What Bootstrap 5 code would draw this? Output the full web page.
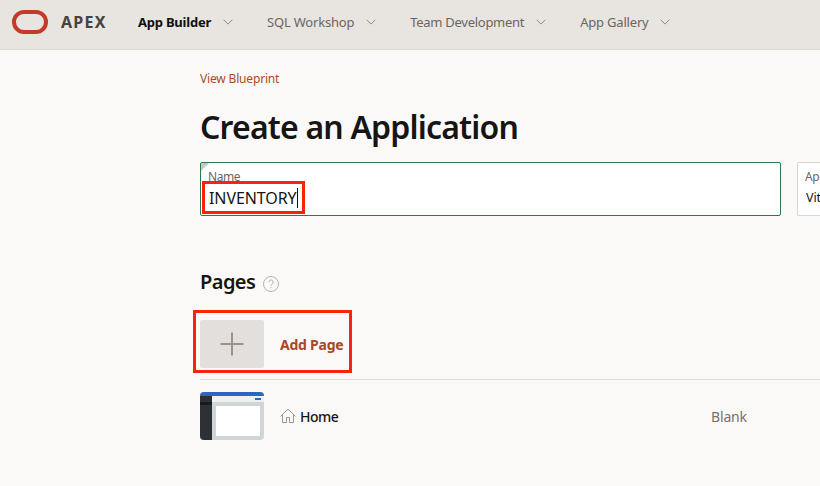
<!DOCTYPE html>
<html lang="en">
<head>
<meta charset="utf-8">
<meta name="viewport" content="width=device-width, initial-scale=1">
<title>Create an Application</title>
<link href="https://cdn.jsdelivr.net/npm/bootstrap@5.3.0/dist/css/bootstrap.min.css" rel="stylesheet">
<style>
body{height:486px;overflow:hidden;background:#fbf9f8;color:#161513;font-family:"Noto Sans","Open Sans",sans-serif;font-size:14px;line-height:20px}
svg{display:block;flex:none}
.topbar{height:50px;background:#e8e4df;border-bottom:1px solid #dedad6;padding:0 0 6px 12px}
.brand-text{width:77px;font-size:16px;font-weight:700;color:#454340;letter-spacing:1.25px;margin-left:13px}
.menu-link,.menu-link:hover{font-size:13px;color:#6a6661;white-space:nowrap;text-decoration:none;margin-right:34px}
.menu-link{letter-spacing:-.2px}
.menu-link.active{font-weight:700;color:#100f0e;letter-spacing:-.22px}
.menu-link.long{letter-spacing:-.28px}
.menu-link svg{color:#8d8984}
.menu-label{margin-right:12px}
.page{padding-left:200px}
.blueprint,.blueprint:hover{font-size:12px;color:#ab4a26;text-decoration:none;margin-top:19px;letter-spacing:-.17px}
.page-title{font-size:32px;line-height:40px;font-weight:600;margin:18px 0 15px;white-space:nowrap;letter-spacing:-.82px}
.field{height:54px;background:#fff;border:1px solid #d9d5d2;border-radius:2px;padding:4px 7px;overflow:hidden}
.field-name{width:581px;border-color:#2b7a4b;overflow:visible}
.corner{left:0;top:0;width:8px;height:8px;background:#c9c7c4;clip-path:polygon(0 0,100% 0,0 100%)}
.field-label{font-size:12px;line-height:20px;color:#6b6762;letter-spacing:-.4px}
.field-value{font-size:16px;line-height:22px;white-space:nowrap;letter-spacing:-.08px;padding-left:1px}
.style-value{font-size:12.5px;padding-left:1px;letter-spacing:-.1px}
.caret{width:1px;height:20px;background:#111}
.callout{position:absolute;border:3px solid #fa2309;pointer-events:none}
.callout-name{left:1px;top:18px;width:103px;height:33px}
.callout-add{left:-7px;top:-10px;width:159px;height:63px}
.pages-head{margin-top:52px;height:28px}
.section-title{font-size:20px;line-height:28px;font-weight:600;margin:0;letter-spacing:-.55px}
.help{margin:8px 0 0 8px;color:#b5b2af}
.add-row{margin-top:24px;height:48px}
.thumb{width:64px;height:48px}
.add-thumb{background:#e3dfdc;border-radius:2px}
.add-label{font-weight:700;color:#a94724;letter-spacing:-.23px;padding-top:2px}
.page-row{border-top:1px solid #e0dddb;height:73px;padding-top:12px;margin-top:11px}
.page-name{font-weight:500;letter-spacing:-.5px;padding-top:2px;margin-left:4px}
.page-kind{width:109px;color:#75716d;letter-spacing:-.15px;padding-top:2px}
</style>
</head>
<body>
<svg class="d-none"><symbol id="chevron" viewBox="0 0 10 6"><path d="M.6.7 5 5.1 9.4.7" fill="none" stroke="currentColor"/></symbol></svg>
<nav class="topbar d-flex align-items-center">
  <svg width="36" height="24" viewBox="0 0 36 24"><rect x="2" y="2" width="32" height="20" rx="10" fill="none" stroke="#c33a2b" stroke-width="4"/></svg>
  <span class="brand-text">APEX</span>
  <a class="menu-link active d-flex align-items-center" href="#"><span class="menu-label">App Builder</span><svg width="10" height="6"><use href="#chevron"/></svg></a>
  <a class="menu-link d-flex align-items-center" href="#"><span class="menu-label">SQL Workshop</span><svg width="10" height="6"><use href="#chevron"/></svg></a>
  <a class="menu-link long d-flex align-items-center" href="#"><span class="menu-label">Team Development</span><svg width="10" height="6"><use href="#chevron"/></svg></a>
  <a class="menu-link d-flex align-items-center" href="#"><span class="menu-label">App Gallery</span><svg width="10" height="6"><use href="#chevron"/></svg></a>
</nav>
<main class="page d-flex flex-column">
  <a class="blueprint align-self-start" href="#">View Blueprint</a>
  <h1 class="page-title">Create an Application</h1>
  <div class="d-flex gap-3">
    <div class="field field-name position-relative flex-shrink-0">
      <span class="corner position-absolute"></span>
      <div class="field-label">Name</div>
      <div class="d-flex align-items-center"><span class="field-value">INVENTORY</span><span class="caret"></span></div>
      <div class="callout callout-name"></div>
    </div>
    <div class="field flex-fill border-end-0 rounded-end-0 pe-0">
      <div class="field-label">Ap</div>
      <div class="field-value style-value">Vit</div>
    </div>
  </div>
  <div class="pages-head d-flex">
    <h2 class="section-title">Pages</h2>
    <svg class="help" width="16" height="16" viewBox="0 0 16 16" fill="none" stroke="currentColor"><circle cx="8" cy="8" r="7.5"/><path d="M5.8 6.2a2.2 2.2 0 1 1 3.4 1.8C8.3 8.6 8 8.9 8 9.9M8 11v1.1"/></svg>
  </div>
  <div class="add-row d-flex align-items-center position-relative">
    <div class="thumb add-thumb d-flex align-items-center justify-content-center"><svg width="24" height="24" viewBox="0 0 24 24"><path d="M.5 12h23M12 .5v23" stroke="#9a928b" stroke-width="2"/></svg></div>
    <span class="add-label ms-3">Add Page</span>
    <div class="callout callout-add"></div>
  </div>
  <div class="page-row d-flex">
    <svg class="thumb rounded-1" viewBox="0 0 64 48" shape-rendering="crispEdges"><path fill="#d0d5d8" d="M0 0h64v48H0z"/><path fill="#eff0f0" d="M12 4h52v6H12z"/><path fill="#2e65c1" d="M0 0h64v4H0zM55 6h6v2h-6z"/><path fill="#2d3136" d="M0 4h12v44H0z"/><path fill="#181b1e" d="M0 10h12v3H0z"/><path fill="#fff" d="M16 14h44v30H16z"/></svg>
    <div class="d-flex align-items-center ms-3 flex-fill thumb">
      <svg width="16" height="16" viewBox="0 0 16 16" fill="none" stroke="#99958f"><path d="M.5 8.4 8 1.2l7.5 7.2M2.5 6.8v7.7h4V9.5h3v5h4V6.8"/></svg>
      <span class="page-name">Home</span>
      <span class="page-kind ms-auto">Blank</span>
    </div>
  </div>
</main>
<script src="https://cdn.jsdelivr.net/npm/bootstrap@5.3.0/dist/js/bootstrap.bundle.min.js"></script>
</body>
</html>
